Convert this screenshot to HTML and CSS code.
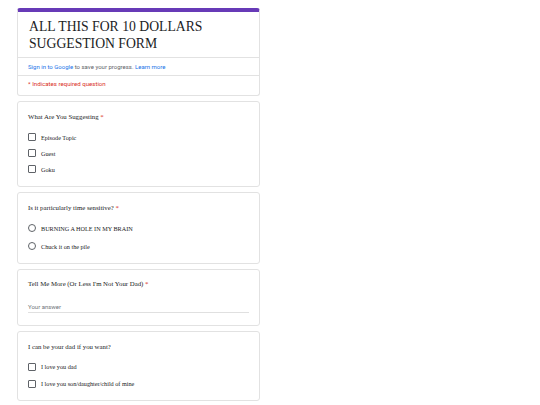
FILE: index.html
```html
<!DOCTYPE html>
<html>
<head>
<meta charset="utf-8">
<link rel="stylesheet" href="styles.css">
</head>
<body>
<main class="form">
  <section class="card header">
    <h1 class="title">ALL THIS FOR 10 DOLLARS<br>SUGGESTION FORM</h1>
    <div class="signin"><a class="link">Sign in to Google</a>&nbsp;to save your progress.&nbsp;<a class="link">Learn more</a></div>
    <div class="required">* Indicates required question</div>
  </section>

  <section class="card q q-check">
    <div class="question">What Are You Suggesting <span class="star">*</span></div>
    <div class="options pitch16">
      <label class="opt"><span class="box"></span><span>Episode Topic</span></label>
      <label class="opt"><span class="box"></span><span>Guest</span></label>
      <label class="opt"><span class="box"></span><span>Goku</span></label>
    </div>
  </section>

  <section class="card q q-radio">
    <div class="question">Is it particularly time sensitive? <span class="star">*</span></div>
    <div class="options pitch18">
      <label class="opt"><span class="radio"></span><span>BURNING A HOLE IN MY BRAIN</span></label>
      <label class="opt"><span class="radio"></span><span>Chuck it on the pile</span></label>
    </div>
  </section>

  <section class="card q q-text">
    <div class="question">Tell Me More (Or Less I'm Not Your Dad) <span class="star">*</span></div>
    <div class="answer">Your answer</div>
  </section>

  <section class="card q q-dad">
    <div class="question">I can be your dad if you want?</div>
    <div class="options pitch17">
      <label class="opt"><span class="box"></span><span>I love you dad</span></label>
      <label class="opt"><span class="box"></span><span>I love you son/daughter/child of mine</span></label>
    </div>
  </section>
</main>
</body>
</html>
```

FILE: styles.css
```css
html, body {
  margin: 0;
  padding: 0;
  background: #ffffff;
}

.form {
  width: 243px;
  margin: 0 0 0 17px;
  padding-top: 8px;
  display: flex;
  flex-direction: column;
  gap: 5px;
}

.card {
  box-sizing: border-box;
  border: 1px solid #e2e2e2;
  border-radius: 3px;
  background: #fff;
}

.header {
  border-top: 4px solid #673ab7;
  display: flex;
  flex-direction: column;
}

.title {
  margin: 0;
  padding: 6px 10px 5px 11px;
  font-family: "Liberation Serif", serif;
  font-weight: normal;
  font-size: 13.7px;
  line-height: 17px;
  color: #202124;
  border-bottom: 1px solid #e2e2e2;
}

.signin {
  height: 17px;
  display: flex;
  align-items: center;
  padding: 0 10px;
  font-family: Roboto, "Liberation Sans", sans-serif;
  font-size: 6px;
  color: #5f6368;
  border-bottom: 1px solid #e2e2e2;
  white-space: nowrap;
}

.link {
  color: #1a73e8;
}

.required {
  height: 19px;
  box-sizing: border-box;
  padding: 0 10px 3px;
  line-height: 16px;
  font-family: Roboto, "Liberation Sans", sans-serif;
  font-size: 6.1px;
  color: #d93025;
}

.q {
  padding: 9px 10px 9px 10px;
}

.question {
  font-family: "Liberation Serif", serif;
  font-size: 6.8px;
  line-height: 12px;
  color: #202124;
  white-space: nowrap;
}

.star {
  color: #d93025;
}

.q-check .question { margin-bottom: 6px; }
.q-radio { padding-bottom: 8px; }
.q-radio .question { margin-bottom: 5px; }
.q-text { padding: 8px 10px 12px; }
.q-dad { padding-bottom: 8px; }
.q-dad .question { margin-bottom: 5px; }

.options {
  display: flex;
  flex-direction: column;
}

.opt {
  display: flex;
  align-items: center;
  gap: 5px;
  font-family: "Liberation Serif", serif;
  font-size: 6.2px;
  color: #202124;
  white-space: nowrap;
}

.pitch16 .opt { height: 16px; }
.pitch17 .opt { height: 17px; }
.pitch18 .opt { height: 18px; }

.box {
  box-sizing: border-box;
  width: 8px;
  height: 8px;
  border: 1px solid #5f6368;
  border-radius: 1px;
  flex: none;
}

.radio {
  box-sizing: border-box;
  width: 8px;
  height: 8px;
  border: 1px solid #5f6368;
  border-radius: 50%;
  flex: none;
}

.answer {
  margin-top: 11px;
  height: 12px;
  box-sizing: border-box;
  line-height: 11px;
  border-bottom: 1px solid #e0e0e0;
  font-family: Roboto, "Liberation Sans", sans-serif;
  font-size: 6px;
  color: #70757a;
}
```
